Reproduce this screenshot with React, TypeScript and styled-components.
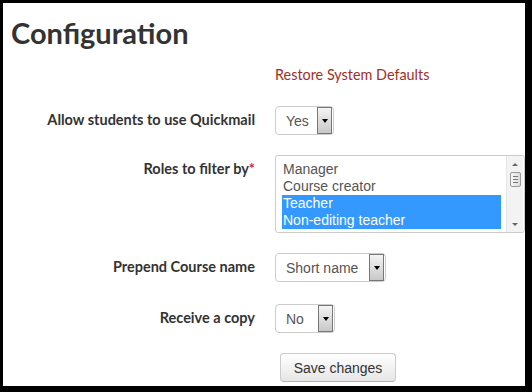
import React from 'react';
import styled, { createGlobalStyle } from 'styled-components';

const GlobalStyle = createGlobalStyle`
  html, body {
    margin: 0;
    padding: 0;
    background: #000;
  }
`;

const Frame = styled.div`
  width: 532px;
  height: 392px;
  box-sizing: border-box;
  background: #000;
  padding: 3px 7px 6px 3px;
`;

const Panel = styled.div`
  height: 100%;
  background: #fff;
  padding: 12px 0 0 8px;
  box-sizing: border-box;
  font-family: Lato, "Open Sans", sans-serif;
  color: #333;
`;

const Title = styled.h2`
  margin: 0;
  font-size: 29px;
  font-weight: 700;
  line-height: 36px;
  color: #333;
`;

const Form = styled.div`
  display: grid;
  grid-template-columns: 244px 1fr;
  column-gap: 20px;
  align-items: start;
  margin-top: 16px;
`;

const Label = styled.div<{ $top?: number }>`
  grid-column: 1;
  text-align: right;
  font-weight: 700;
  font-size: 14.5px;
  line-height: 18px;
  padding-top: ${({ $top }) => $top ?? 5}px;
`;

const Required = styled.span`
  color: #e02020;
`;

const Control = styled.div<{ $gap?: number }>`
  grid-column: 2;
  margin-bottom: ${({ $gap }) => $gap ?? 20}px;
`;

const RestoreLink = styled.a`
  grid-column: 2;
  display: block;
  color: #a0301f;
  font-size: 14.4px;
  line-height: 16px;
  text-decoration: none;
  margin-bottom: 23px;
`;

const SelectBox = styled.div<{ $width: number }>`
  width: ${({ $width }) => $width}px;
  height: 29px;
  box-sizing: border-box;
  border: 1px solid #ccc;
  border-radius: 4px;
  display: flex;
  align-items: center;
  justify-content: space-between;
  padding: 0 1px 0 10px;
  font-family: "Liberation Sans", Arial, sans-serif;
  font-size: 14px;
  color: #555;
  background: #fff;
`;

const DropButton = styled.span`
  width: 15px;
  height: 27px;
  box-sizing: border-box;
  border: 1px solid #777;
  background: linear-gradient(#f4f4f4, #c8c8c8);
  display: flex;
  align-items: center;
  justify-content: center;
  &::after {
    content: '';
    border-left: 3.5px solid transparent;
    border-right: 3.5px solid transparent;
    border-top: 4px solid #000;
  }
`;

const ListBox = styled.div`
  width: 250px;
  height: 78px;
  box-sizing: border-box;
  border: 1px solid #ccc;
  border-radius: 3px;
  display: flex;
  overflow: hidden;
  background: #fff;
`;

const Options = styled.ul`
  list-style: none;
  margin: 0;
  padding: 5px 0 0 6px;
  width: 219px;
  font-family: "Liberation Sans", Arial, sans-serif;
  font-size: 14px;
  line-height: 17px;
  color: #555;
`;

const Option = styled.li<{ $selected?: boolean }>`
  padding-left: 1px;
  white-space: nowrap;
  background: ${({ $selected }) => ($selected ? '#3399ff' : 'transparent')};
  color: ${({ $selected }) => ($selected ? '#fff' : '#555')};
`;

const ScrollTrack = styled.div`
  margin-left: auto;
  margin-right: 1px;
  width: 16px;
  display: flex;
  flex-direction: column;
  align-items: center;
  background: #f3f3f3;
  border-left: 1px solid #e6e6e6;
`;

const Arrow = styled.span<{ $up?: boolean }>`
  height: 16px;
  display: flex;
  align-items: center;
  justify-content: center;
  &::after {
    content: '';
    border-left: 3px solid transparent;
    border-right: 3px solid transparent;
    ${({ $up }) => ($up ? 'border-bottom: 3px solid #666;' : 'border-top: 3px solid #666;')}
  }
`;

const Thumb = styled.span`
  width: 11px;
  height: 15px;
  box-sizing: border-box;
  border: 1px solid #999;
  border-radius: 2px;
  background: linear-gradient(90deg, #f8f8f8, #dcdcdc);
  display: flex;
  flex-direction: column;
  justify-content: center;
  gap: 2px;
  padding: 0 2px;
`;

const Grip = styled.span`
  height: 1px;
  background: #777;
`;

const Spacer = styled.span`
  flex: 1;
`;

const SaveButton = styled.button`
  grid-column: 2;
  justify-self: start;
  margin-left: 5px;
  width: 116px;
  height: 29px;
  border: 1px solid #ccc;
  border-bottom-color: #b3b3b3;
  border-radius: 4px;
  background: linear-gradient(#ffffff, #e6e6e6);
  font-family: "Liberation Sans", Arial, sans-serif;
  font-size: 14px;
  color: #333;
  padding: 0;
`;

const Select: React.FC<{ value: string; width: number }> = ({ value, width }) => (
  <SelectBox $width={width}>
    <span>{value}</span>
    <DropButton />
  </SelectBox>
);

const roles = [
  { name: 'Manager', selected: false },
  { name: 'Course creator', selected: false },
  { name: 'Teacher', selected: true },
  { name: 'Non-editing teacher', selected: true },
];

export default function App() {
  return (
    <Frame>
      <GlobalStyle />
      <Panel>
        <Title>Configuration</Title>
        <Form>
          <RestoreLink href="#">Restore System Defaults</RestoreLink>

          <Label>Allow students to use Quickmail</Label>
          <Control>
            <Select value="Yes" width={59} />
          </Control>

          <Label $top={5}>
            Roles to filter by<Required>*</Required>
          </Label>
          <Control>
            <ListBox>
              <Options>
                {roles.map((r) => (
                  <Option key={r.name} $selected={r.selected}>
                    {r.name}
                  </Option>
                ))}
              </Options>
              <ScrollTrack>
                <Arrow $up />
                <Thumb>
                  <Grip />
                  <Grip />
                  <Grip />
                </Thumb>
                <Spacer />
                <Arrow />
              </ScrollTrack>
            </ListBox>
          </Control>

          <Label>Prepend Course name</Label>
          <Control $gap={22}>
            <Select value="Short name" width={111} />
          </Control>

          <Label>Receive a copy</Label>
          <Control>
            <Select value="No" width={60} />
          </Control>

          <SaveButton>Save changes</SaveButton>
        </Form>
      </Panel>
    </Frame>
  );
}
